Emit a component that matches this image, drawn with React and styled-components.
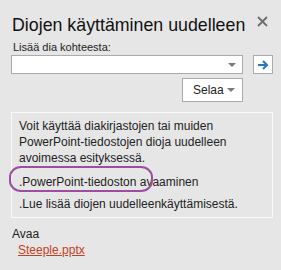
import React from "react";
import styled, { createGlobalStyle } from "styled-components";

const Global = createGlobalStyle`
  html, body { margin: 0; padding: 0; background: #e6e6e6; }
  body { font-family: "Liberation Sans", Arial, sans-serif; color: #222; }
`;

const Pane = styled.div`
  width: 281px;
  height: 270px;
  box-sizing: border-box;
  padding: 14px 8px 0 11px;
  background: #e6e6e6;
  overflow: hidden;
`;

const Header = styled.div`
  display: flex;
  justify-content: space-between;
  align-items: flex-start;
`;

const Title = styled.h1`
  margin: 0;
  font-size: 17.8px;
  font-weight: normal;
  line-height: 22px;
  color: #111;
  padding-left: 1px;
`;

const Close = styled.button`
  border: none;
  background: none;
  padding: 0;
  margin: 2px 4px 0 0;
  width: 12px;
  height: 12px;
  display: flex;
`;

const Label = styled.div`
  font-size: 11px;
  margin: 4px 0 0 2px;
  color: #222;
  line-height: 14px;
`;

const Row = styled.div`
  display: flex;
  align-items: center;
  gap: ${p => p.gap || 0}px;
  justify-content: ${p => p.end ? "flex-end" : "flex-start"};
  margin-top: ${p => p.top || 0}px;
  padding-right: ${p => p.right || 0}px;
`;

const Combo = styled.div`
  width: 232px;
  height: 19px;
  box-sizing: border-box;
  background: #fff;
  border: 1px solid #ababab;
  display: flex;
  justify-content: flex-end;
  align-items: center;
  padding-right: 6px;
`;

const Caret = styled.span`
  width: 0;
  height: 0;
  border-left: 4px solid transparent;
  border-right: 4px solid transparent;
  border-top: 4px solid #7a7a7a;
`;

const GoButton = styled.button`
  width: 20px;
  height: 19px;
  box-sizing: border-box;
  border: 1px solid #ababab;
  background: #fff;
  padding: 0;
  display: flex;
  align-items: center;
  justify-content: center;
`;

const Browse = styled.button`
  width: 61px;
  height: 24px;
  box-sizing: border-box;
  border: 1px solid #ababab;
  background: #fff;
  font-family: inherit;
  font-size: 12px;
  color: #222;
  display: flex;
  align-items: center;
  padding: 0 7px 0 10px;
  justify-content: space-between;
`;

const InfoBox = styled.div`
  margin-top: 10px;
  width: 262px;
  height: 106px;
  box-sizing: border-box;
  border: 1px solid #fafafa;
  padding: 5px 6px 0 7px;
  font-size: 12px;
  line-height: 16px;
  color: #222;
`;

const Para = styled.p`
  margin: 0;
  width: 220px;
`;

const LinkLine = styled.div`
  position: relative;
  margin-top: ${p => p.top || 0}px;
`;

const Oval = styled.span`
  position: absolute;
  left: -10px;
  top: -8px;
  width: 144px;
  height: 26px;
  box-sizing: border-box;
  border: 2.5px solid #9c4fa0;
  border-radius: 12px / 11px;
`;

const Section = styled.div`
  margin: 8px 0 0 1px;
  font-size: 12px;
  line-height: 16px;
`;

const FileLink = styled.a`
  display: inline-block;
  margin: 0 0 0 6px;
  color: #c4401f;
  text-decoration: underline;
  font-size: 12px;
`;

export default function App() {
  return (
    <Pane>
      <Global />
      <Header>
        <Title>Diojen käyttäminen uudelleen</Title>
        <Close aria-label="Sulje">
          <svg width="11" height="11" viewBox="0 0 11 11">
            <path d="M1 1L10 10M10 1L1 10" stroke="#6d6d6d" strokeWidth="1.8" />
          </svg>
        </Close>
      </Header>
      <Label>Lisää dia kohteesta:</Label>
      <Row top={1} gap={10}>
        <Combo><Caret /></Combo>
        <GoButton aria-label="Siirry">
          <svg width="12" height="10" viewBox="0 0 12 10">
            <path d="M1 5H10M6 1L10 5L6 9" stroke="#2f75c4" strokeWidth="2" fill="none" />
          </svg>
        </GoButton>
      </Row>
      <Row top={4} end right={30}>
        <Browse>Selaa<Caret /></Browse>
      </Row>
      <InfoBox>
        <Para>Voit käyttää diakirjastojen tai muiden PowerPoint-tiedostojen dioja uudelleen avoimessa esityksessä.</Para>
        <LinkLine top={8}>
          <Oval />
          .PowerPoint-tiedoston avaaminen
        </LinkLine>
        <LinkLine top={6}>.Lue lisää diojen uudelleenkäyttämisestä.</LinkLine>
      </InfoBox>
      <Section>
        <div>Avaa</div>
        <FileLink href="#">Steeple.pptx</FileLink>
      </Section>
    </Pane>
  );
}
